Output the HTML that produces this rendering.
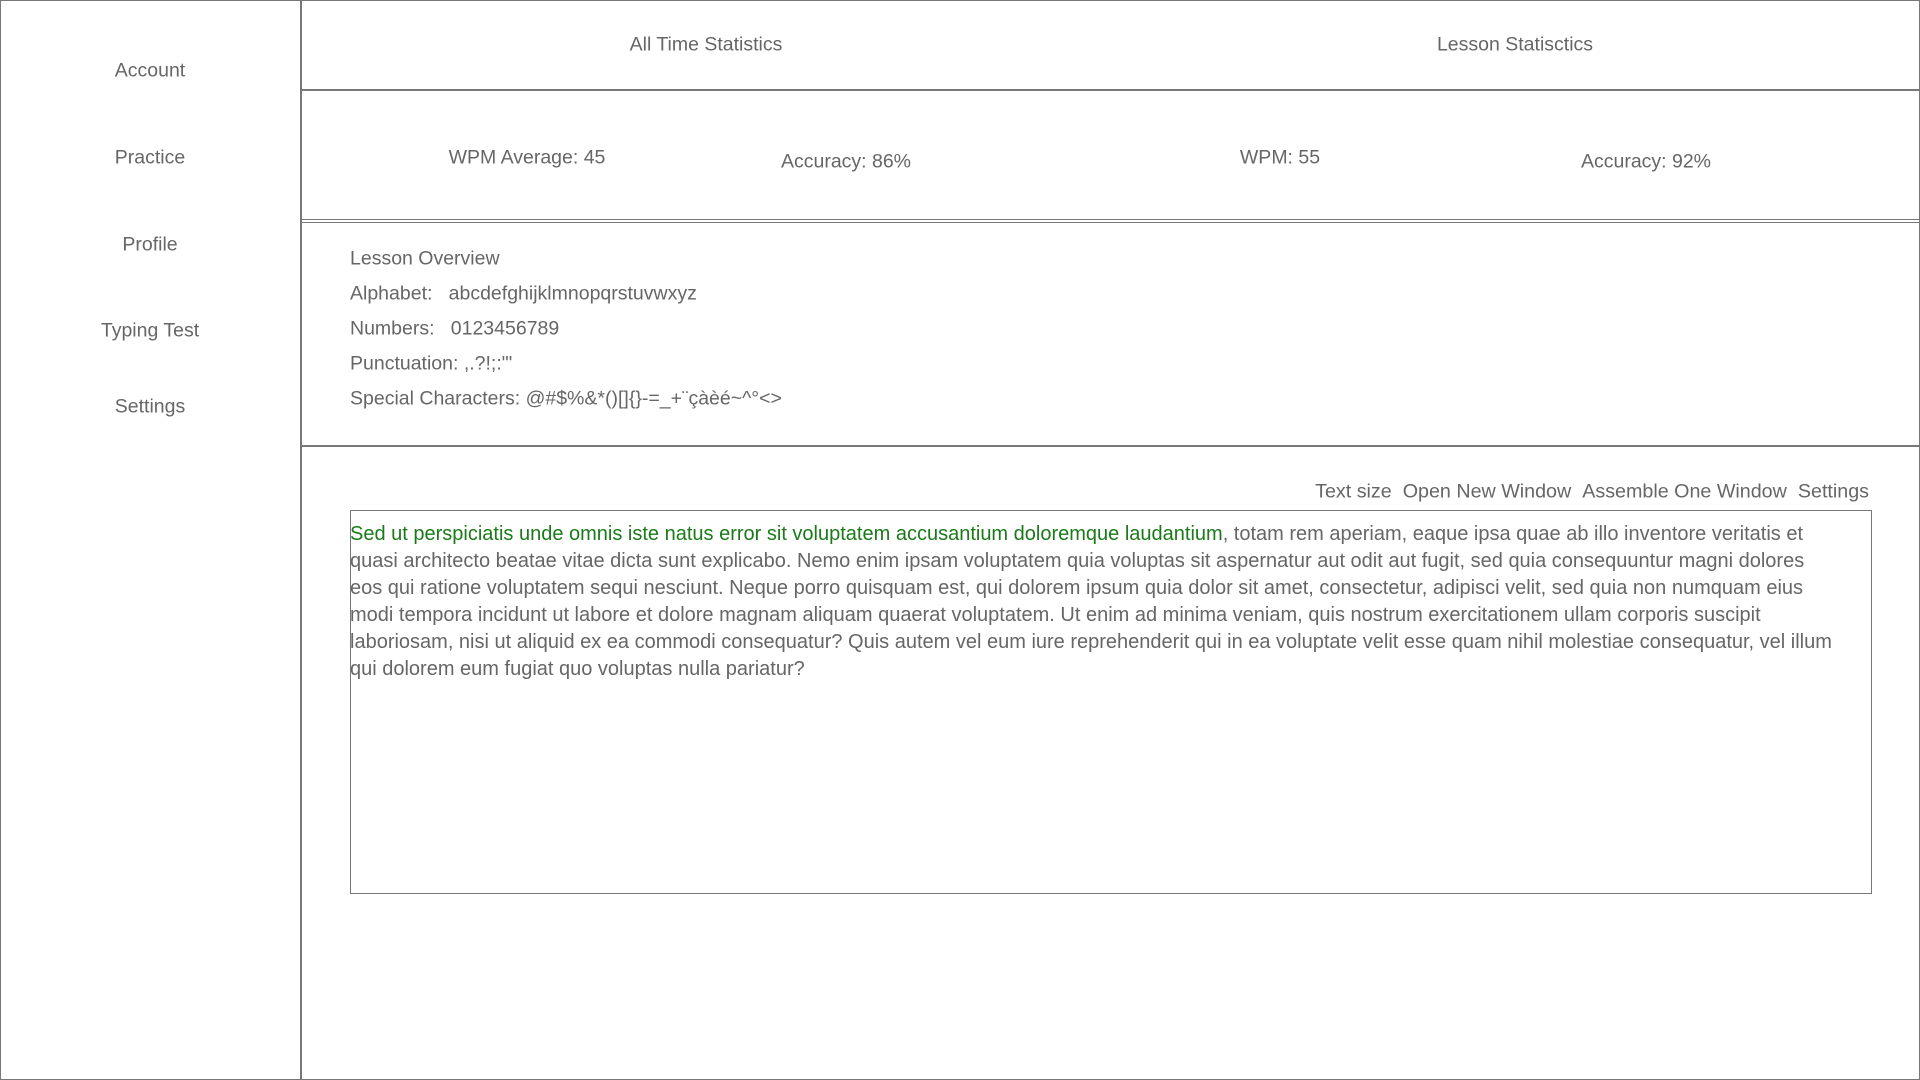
<!DOCTYPE html>
<html><head><meta charset="utf-8"><style>
html,body{margin:0;padding:0;width:1920px;height:1080px;overflow:hidden;background:#fff}
body{font-family:"Liberation Sans",sans-serif;color:#666;font-size:19.5px;position:relative}
.frame{position:absolute;left:0;top:0;width:1918px;height:1078px;border:1px solid #777}
.vl{position:absolute;left:300px;top:0;width:2px;height:1080px;background:#777}
.hl{position:absolute;left:301px;right:0;height:2px;background:#777}
.t{position:absolute;white-space:nowrap;transform:translate(-50%,-50%)}
.l{position:absolute;white-space:nowrap;left:350px;transform:translateY(-50%);font-size:19.5px}
.box{position:absolute;left:350px;top:510px;width:1520px;height:382px;border:1px solid #777}
.p{position:absolute;left:350px;top:521px;width:1485px;line-height:27px;font-size:20px}
.g{color:#1a7a1a}
.tb{position:absolute;right:51px;top:492px;transform:translateY(-50%);white-space:nowrap;font-size:19.7px}
.tb span{margin-left:11px}
</style></head><body>
<div class="frame"></div>
<div class="vl"></div>
<div class="hl" style="top:89px"></div>
<div class="hl" style="top:219px;height:1px"></div>
<div class="hl" style="top:222px;height:1px"></div>
<div class="hl" style="top:445px"></div>

<div class="t" style="left:150px;top:71px">Account</div>
<div class="t" style="left:150px;top:158px">Practice</div>
<div class="t" style="left:150px;top:245px">Profile</div>
<div class="t" style="left:150px;top:331px">Typing Test</div>
<div class="t" style="left:150px;top:407px">Settings</div>

<div class="t" style="left:706px;top:45px">All Time Statistics</div>
<div class="t" style="left:1515px;top:45px">Lesson Statisctics</div>

<div class="t" style="left:527px;top:158px">WPM Average: 45</div>
<div class="t" style="left:846px;top:162px">Accuracy: 86%</div>
<div class="t" style="left:1280px;top:158px">WPM: 55</div>
<div class="t" style="left:1646px;top:162px">Accuracy: 92%</div>

<div class="l" style="top:259px">Lesson Overview</div>
<div class="l" style="top:294px">Alphabet:&nbsp;&nbsp; abcdefghijklmnopqrstuvwxyz</div>
<div class="l" style="top:329px">Numbers:&nbsp;&nbsp; 0123456789</div>
<div class="l" style="top:364px">Punctuation: ,.?!;:"'</div>
<div class="l" style="top:399px">Special Characters: @#$%&amp;*()[]{}-=_+¨çàèé~^°&lt;&gt;</div>

<div class="tb"><span>Text size</span><span>Open New Window</span><span>Assemble One Window</span><span>Settings</span></div>

<div class="box"></div>
<div class="p"><span class="g">Sed ut perspiciatis unde omnis iste natus error sit voluptatem accusantium doloremque laudantium</span>, totam rem aperiam, eaque ipsa quae ab illo inventore veritatis et quasi architecto beatae vitae dicta sunt explicabo. Nemo enim ipsam voluptatem quia voluptas sit aspernatur aut odit aut fugit, sed quia consequuntur magni dolores eos qui ratione voluptatem sequi nesciunt. Neque porro quisquam est, qui dolorem ipsum quia dolor sit amet, consectetur, adipisci velit, sed quia non numquam eius modi tempora incidunt ut labore et dolore magnam aliquam quaerat voluptatem. Ut enim ad minima veniam, quis nostrum exercitationem ullam corporis suscipit laboriosam, nisi ut aliquid ex ea commodi consequatur? Quis autem vel eum iure reprehenderit qui in ea voluptate velit esse quam nihil molestiae consequatur, vel illum qui dolorem eum fugiat quo voluptas nulla pariatur?</div>
</body></html>
